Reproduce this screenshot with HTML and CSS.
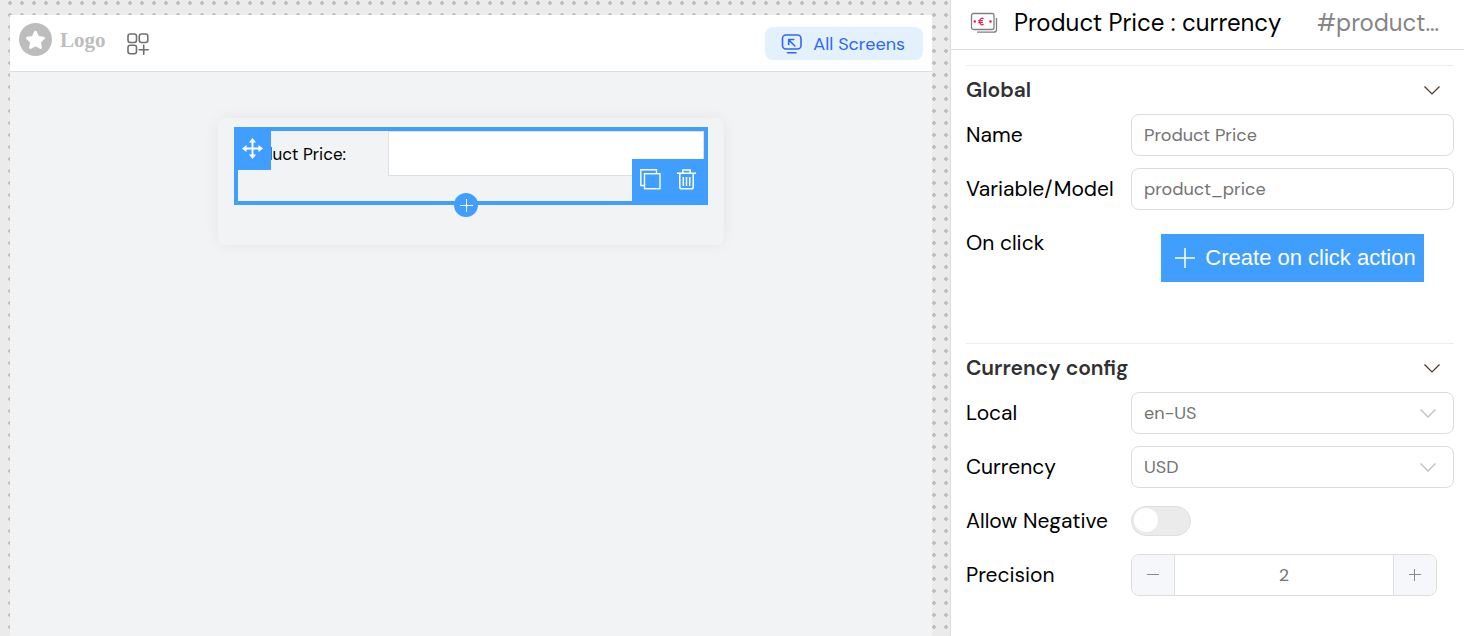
FILE: index.html
```html
<!DOCTYPE html>
<html lang="en">
<head>
<meta charset="utf-8">
<title>Screen builder</title>
<link rel="stylesheet" href="styles.css">
</head>
<body>
<div class="app">
  <main class="canvas">
    <div class="device">
      <header class="topbar">
        <div class="brand">
          <svg class="brand-mark" viewBox="0 0 33 33" aria-hidden="true"><circle cx="16.500" cy="16.500" r="16.500" fill="#bdbdbd"/><path d="M16.500 9l2.500 5.300 5.700.8-4.200 4 1.100 5.600-5.100-2.800-5.100 2.800 1.100-5.600-4.200-4 5.700-.8z" fill="#fff" stroke="#fff" stroke-width="2.600" stroke-linejoin="round"/></svg>
          <span class="brand-name">Logo</span>
        </div>
        <button class="icon-button" type="button" aria-label="Add widget">
          <svg width="22" height="22" viewBox="0 0 22 22" fill="none" stroke="#707070" stroke-width="1.600" stroke-linecap="round"><rect x="1" y="1" width="8.500" height="8.500" rx="2.200"/><rect x="12.300" y="1" width="8.500" height="8.500" rx="2.200"/><rect x="1" y="12.300" width="8.500" height="8.500" rx="2.200"/><path d="M16.700 12.300v9M12.200 16.800h9"/></svg>
        </button>
        <button class="screens-button" type="button">
          <svg width="22" height="20" viewBox="0 0 22 20" fill="none" stroke="#2f67f6" stroke-width="1.600" stroke-linecap="round" stroke-linejoin="round"><rect x="1.500" y="1" width="18.500" height="14" rx="3.500"/><path d="M6.500 18.800h8.500M13.800 12L8 6M7.700 10.500V5.500h5"/></svg>
          All Screens
        </button>
      </header>
      <section class="card">
        <div class="selection">
          <div class="field">
            <label class="field-label" for="price">Product Price:</label>
            <input class="field-input" id="price" type="text">
          </div>
          <button class="move" type="button" aria-label="Move">
            <svg width="21" height="21" viewBox="0 0 21 21"><path d="M10.500 3v15M3 10.500h15" stroke="#fff" stroke-width="1.900"/><path d="M10.500 0l3.500 4.500h-7zM10.500 21l3.500-4.500h-7zM0 10.500l4.500-3.500v7zM21 10.500l-4.500-3.500v7z" fill="#fff"/></svg>
          </button>
          <div class="actions">
            <button class="action" type="button" aria-label="Duplicate">
              <svg width="21" height="21" viewBox="0 0 21 21" fill="none" stroke="#fff" stroke-width="1.400"><path d="M4 16.500H.8V.8h15.700V4"/><rect x="4.500" y="4.700" width="15.500" height="15"/></svg>
            </button>
            <button class="action" type="button" aria-label="Delete">
              <svg width="19" height="21" viewBox="0 0 19 21" fill="none" stroke="#fff" stroke-width="1.500"><path d="M0 4.300h19M5.800 4V1h7.400v3M2.800 4.500v13.500q0 1.800 1.800 1.800h9.800q1.800 0 1.800-1.800V4.500M6.300 8v9M9.500 8v9M12.700 8v9"/></svg>
            </button>
          </div>
          <button class="add" type="button" aria-label="Add element">
            <svg width="14" height="14" viewBox="0 0 14 14"><path d="M7.500 1v13M1 7.500h13" stroke="#fff"/></svg>
          </button>
        </div>
      </section>
    </div>
  </main>
  <aside class="panel">
    <header class="panel-head">
      <svg class="money" width="28" height="22" viewBox="0 0 28 22" fill="none"><rect x="1.500" y="1.500" width="22.500" height="16" rx="2" stroke="#808080" stroke-width="1.300"/><path d="M26.500 6v11.500q0 2.700-2.700 2.700H7" stroke="#808080" stroke-width="1.300"/><path d="M13.500 6.700q-1-.9-2.200-.5-1.500.5-1.500 3.300t1.500 3.300q1.200.4 2.200-.5M8.300 8.700h4.500M8.300 10.500h4.500" stroke="#f5144b" stroke-width="1.200"/><circle cx="4.800" cy="9.500" r="1.200" fill="#f5144b"/><circle cx="20.500" cy="9.500" r="1.200" fill="#f5144b"/></svg>
      <h1 class="title">Product Price : currency</h1>
      <span class="ident">#product…</span>
    </header>
    <form class="sections">
      <section class="section">
        <h2 class="section-head">Global
          <svg class="chevron" width="16" height="9" viewBox="0 0 16 9"><path d="M.5.500L8 8 15.500.500" fill="none" stroke="#4a3528" stroke-width="1.200"/></svg>
        </h2>
        <div class="row">
          <label class="row-label" for="name">Name</label>
          <input class="control" id="name" type="text" value="Product Price">
        </div>
        <div class="row">
          <label class="row-label" for="model">Variable/Model</label>
          <input class="control" id="model" type="text" value="product_price">
        </div>
        <div class="row row-action">
          <span class="row-label">On click</span>
          <button class="create" type="button">
            <svg width="20" height="20" viewBox="0 0 20 20"><path d="M10 0v20M0 10h20" stroke="#fff" stroke-width="1.500"/></svg>
            Create on click action
          </button>
        </div>
      </section>
      <section class="section">
        <h2 class="section-head">Currency config
          <svg class="chevron" width="16" height="9" viewBox="0 0 16 9"><path d="M.5.500L8 8 15.500.500" fill="none" stroke="#4a3528" stroke-width="1.200"/></svg>
        </h2>
        <div class="row">
          <label class="row-label" for="local">Local</label>
          <div class="select">
            <select class="control" id="local"><option>en-US</option></select>
            <svg class="select-arrow" width="16" height="9" viewBox="0 0 16 9"><path d="M.5.500L8 8 15.500.500" fill="none" stroke="#c0c4cc" stroke-width="1.500"/></svg>
          </div>
        </div>
        <div class="row">
          <label class="row-label" for="currency">Currency</label>
          <div class="select">
            <select class="control" id="currency"><option>USD</option></select>
            <svg class="select-arrow" width="16" height="9" viewBox="0 0 16 9"><path d="M.5.500L8 8 15.500.500" fill="none" stroke="#c0c4cc" stroke-width="1.500"/></svg>
          </div>
        </div>
        <div class="row">
          <label class="row-label" for="negative">Allow Negative</label>
          <input class="toggle" id="negative" type="checkbox">
        </div>
        <div class="row">
          <label class="row-label" for="precision">Precision</label>
          <div class="stepper">
            <button class="step" type="button" aria-label="Decrease"><svg width="12" height="12" viewBox="0 0 12 12"><path d="M0 5.500h12" stroke="#85888e"/></svg></button>
            <input class="step-value" id="precision" type="text" value="2">
            <button class="step" type="button" aria-label="Increase"><svg width="12" height="12" viewBox="0 0 12 12"><path d="M0 5.500h12M5.500 0v12" stroke="#85888e"/></svg></button>
          </div>
        </div>
      </section>
    </form>
  </aside>
</div>
</body>
</html>
```
FILE: styles.css
```css
* { box-sizing: border-box; }
body { margin: 0; font-family: "DM Sans", Inter, "Liberation Sans", sans-serif; color: #000; }
button, input, select { font: inherit; margin: 0; padding: 0; border: 0; }
button { display: flex; align-items: center; justify-content: center; background: none; color: inherit; }
svg { display: block; flex: none; }

.app { display: flex; min-height: 100vh; }
.canvas {
  flex: 1; min-width: 0; display: flex; padding: 15px 18px 0 10px;
  background: #ebebeb radial-gradient(circle at 6px 6px, #c0c0c0 1px, #c0c0c0 2px, transparent 2px) 4px -3px / 12px 12px;
}
.device { flex: 1; background: #f2f3f5; }

.topbar { display: flex; align-items: center; height: 57px; padding: 1px 9px 0; background: #fff; border-bottom: 1px solid #dedede; }
.brand { display: flex; align-items: center; gap: 8px; padding-bottom: 8px; }
.brand-mark { width: 33px; height: 33px; }
.brand-name { font: bold 21px/24px "Liberation Serif", serif; color: #bdbdbd; }
.icon-button { margin-left: 21px; }
.screens-button { gap: 10px; height: 33px; margin-left: auto; padding: 0 18px 0 16px; border-radius: 8px; background: #e3f1fd; color: #2f67f6; font-size: 18px; }

.card { width: 100%; max-width: 506px; margin: 46px auto 0; padding: 9px 16px 40px; border-radius: 8px; background: #f2f3f5; box-shadow: 0 0 16px rgba(0, 0, 0, .06); }
.selection { position: relative; height: 78px; border: 4px solid #409eff; }
.field { display: flex; height: 45px; }
.field-label { display: flex; justify-content: flex-end; width: 150px; padding-right: 42px; font-size: 17px; line-height: 46px; white-space: nowrap; }
.field-input { flex: 1; min-width: 0; padding: 0 12px; background: #fff; border: 1px solid #dcdfe6; }
.move { position: absolute; left: -4px; top: -4px; width: 37px; height: 43px; background: #409eff; }
.actions { position: absolute; right: -4px; bottom: -4px; display: flex; gap: 16px; height: 46px; padding: 0 12px 6px 8px; background: #409eff; }
.add { position: absolute; left: 50%; bottom: -16px; width: 24px; height: 24px; margin-left: -17px; border-radius: 50%; background: #409eff; }

.panel { width: 514px; background: #fff; border-left: 1px solid #dcdcdc; }
.panel-head { display: flex; align-items: center; height: 50px; padding: 0 25px 3px 19px; border-bottom: 1px solid #dcdcdc; }
.title { margin: 0 0 0 16px; font-size: 24px; font-weight: 400; line-height: 32px; white-space: nowrap; }
.ident { margin-left: auto; font-size: 24px; line-height: 32px; color: #858585; }

.sections { display: flex; flex-direction: column; gap: 61px; padding: 15px 10px 24px 15px; }
.section { display: flex; flex-direction: column; gap: 12px; border-top: 1px solid #ebeef5; }
.section-head { display: flex; align-items: center; justify-content: space-between; height: 48px; margin: 0 0 -12px; padding-right: 14px; font-size: 21px; font-weight: 600; color: #303133; }
.row { display: flex; align-items: center; min-height: 42px; font-size: 21px; }
.row-label { flex: none; width: 165px; line-height: 42px; white-space: nowrap; }
.control { flex: 1; width: 100%; min-width: 0; height: 42px; padding: 0 12px; border: 1px solid #dcdcdc; border-radius: 8px; background: #fff; color: #737373; font-size: 18px; appearance: none; }
.select { position: relative; flex: 1; }
.select-arrow { position: absolute; right: 18px; top: 17px; pointer-events: none; }
.row-action { align-items: flex-start; }
.create { gap: 10px; height: 48px; margin: 12px auto 0; padding: 0 8px 0 14px; background: #409eff; color: #fff; font: 22px "Liberation Sans", Arial, sans-serif; }
.toggle { appearance: none; width: 60px; height: 30px; padding: 1px 2px; border: 1px solid #dcdfe6; border-radius: 15px; background: #ebebeb; }
.toggle::before { content: ""; display: block; width: 24px; height: 24px; border-radius: 50%; background: #fff; }
.toggle:checked::before { margin-left: auto; }
.stepper { display: flex; flex: 1; height: 42px; margin-right: 17px; border: 1px solid #dcdcdc; border-radius: 8px; overflow: hidden; }
.step { width: 42px; background: #f5f7fa; }
.step-value { flex: 1; min-width: 0; border: solid #dcdfe6; border-width: 0 1px; color: #737373; font-size: 18px; text-align: center; }
```
